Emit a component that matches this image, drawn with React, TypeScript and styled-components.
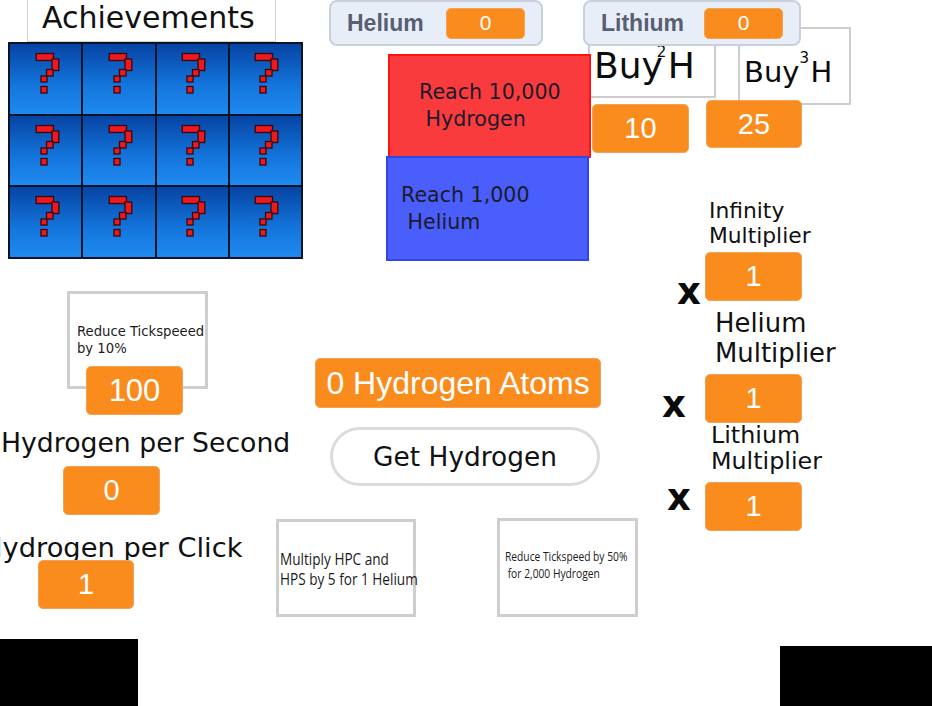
import React from "react";
import styled, { createGlobalStyle } from "styled-components";

const GlobalStyle = createGlobalStyle`
  html, body { margin: 0; padding: 0; background: #ffffff; }
  body { font-family: "DejaVu Sans", "Open Sans", sans-serif; color: #111; }
  * { box-sizing: border-box; }
`;

type Offset = { $mt?: number; $ml?: number };
const offset = (p: Offset) => `margin: ${p.$mt ?? 0}px 0 0 ${p.$ml ?? 0}px;`;

const Screen = styled.main`
  display: flex;
  align-items: flex-start;
  width: 932px;
  height: 706px;
  overflow: hidden;
  background: #ffffff;
`;

const Column = styled.section<{ $w: number }>`
  display: flex;
  flex-direction: column;
  align-items: flex-start;
  flex: 0 0 ${(p) => p.$w}px;
  width: ${(p) => p.$w}px;
`;

/* ---------- achievements ---------- */
const AchievementPanel = styled.div`
  display: flex;
  flex-direction: column;
  align-items: flex-start;
  margin-left: 8px;
`;

const PanelTitle = styled.div`
  margin-left: 19px;
  width: 249px;
  height: 42px;
  padding-left: 14px;
  border: 1px solid #cfcfcf;
  border-top: none;
  background: #fff;
  font-size: 30px;
  line-height: 35px;
  color: #111;
`;

const AchievementGrid = styled.div`
  display: grid;
  grid-template-columns: repeat(4, 1fr);
  grid-template-rows: repeat(3, 1fr);
  gap: 2px;
  padding: 2px;
  width: 295px;
  height: 217px;
  background: #0b1424;
`;

const Tile = styled.div`
  display: flex;
  justify-content: center;
  align-items: flex-start;
  padding: 8px 0 0 3px;
  background: linear-gradient(180deg, #0644a4 0%, #1476dc 60%, #1e8af1 100%);
`;

const MysteryMark = () => (
  <svg width="25" height="43" viewBox="0 0 25 43">
    <g fill="#ec1a1f" stroke="#3b0608" strokeWidth="1.3">
      <rect x="1.2" y="1.5" width="17.3" height="7" />
      <rect x="17" y="7" width="6.8" height="11.5" />
      <rect x="11.5" y="17.5" width="6.5" height="6.5" />
      <rect x="6" y="24" width="6" height="6" />
      <rect x="6" y="34.5" width="6" height="6.5" />
    </g>
  </svg>
);

/* ---------- resource pills ---------- */
const ResourcePill = styled.div<Offset & { $w: number }>`
  ${offset}
  position: relative;
  z-index: 3;
  display: flex;
  align-items: center;
  justify-content: space-between;
  width: ${(p) => p.$w}px;
  height: 46px;
  padding: 0 16px;
  background: #e8eef7;
  border: 2px solid #c8d0dd;
  border-radius: 8px;
`;

const PillLabel = styled.span`
  font-family: "Liberation Sans", Arial, sans-serif;
  font-weight: 700;
  font-size: 23px;
  color: #575e75;
`;

/* ---------- orange value boxes ---------- */
const Value = styled.div<Offset & { $w: number; $h: number; $size: number }>`
  ${offset}
  position: relative;
  z-index: 2;
  display: flex;
  flex: 0 0 auto;
  align-items: center;
  justify-content: center;
  width: ${(p) => p.$w}px;
  height: ${(p) => p.$h}px;
  background: #fa8c1e;
  border: 1px solid #f2a257;
  border-radius: 5px;
  color: #ffffff;
  font-family: "Liberation Sans", Arial, sans-serif;
  font-size: ${(p) => p.$size}px;
  white-space: nowrap;
`;

/* ---------- goal cards ---------- */
const GoalCard = styled.div<Offset & { $bg: string; $edge: string; $pad: number; $h: number }>`
  ${offset}
  position: relative;
  display: flex;
  align-items: center;
  width: 203px;
  height: ${(p) => p.$h}px;
  padding-left: ${(p) => p.$pad}px;
  background: ${(p) => p.$bg};
  border: 2px solid ${(p) => p.$edge};
  font-size: 20.6px;
  line-height: 27px;
  color: #1c1a2b;
  white-space: pre;
`;

/* ---------- buy cards ---------- */
const BuyRow = styled.div`
  display: flex;
  align-items: flex-start;
  margin-top: -19px;
`;

const BuyStack = styled.div<Offset>`
  ${offset}
  display: flex;
  flex-direction: column;
  align-items: flex-start;
`;

const BuyCard = styled.div<{ $w: number; $h: number; $size: number; $padTop: number }>`
  width: ${(p) => p.$w}px;
  height: ${(p) => p.$h}px;
  padding: ${(p) => p.$padTop}px 0 0 4px;
  background: #fff;
  border: 2px solid #cdcdcd;
  font-size: ${(p) => p.$size}px;
  line-height: 1;
  color: #0c0c0c;
  white-space: nowrap;
`;

const Power = styled.span<{ $gap: number; $dx: number; $dy: number }>`
  display: inline-block;
  position: relative;
  width: ${(p) => p.$gap}px;
  left: ${(p) => p.$dx}px;
  top: ${(p) => p.$dy}px;
  font-size: 15px;
  line-height: 1;
  vertical-align: top;
`;

/* ---------- labels ---------- */
const StackLabel = styled.div<Offset & { $size: number; $lh: number }>`
  ${offset}
  font-size: ${(p) => p.$size}px;
  line-height: ${(p) => p.$lh}px;
  color: #111;
  white-space: pre;
`;

const MultRow = styled.div<{ $mt: number }>`
  display: flex;
  align-items: flex-start;
  margin: ${(p) => p.$mt}px 0 0 79px;
`;

const Times = styled.div<{ $x: number; $y: number }>`
  flex: 0 0 43px;
  margin-top: ${(p) => p.$y}px;
  padding-left: ${(p) => p.$x}px;
  font-size: 37px;
  font-weight: 700;
  line-height: 36px;
  color: #0a0a0a;
`;

/* ---------- cards with small text ---------- */
const InfoCard = styled.div<Offset & { $w: number; $h: number }>`
  ${offset}
  flex: 0 0 auto;
  width: ${(p) => p.$w}px;
  height: ${(p) => p.$h}px;
  background: #fff;
  border: 3px solid #cecece;
`;

const CardText = styled.div<{ $size: number; $lh: number; $top: number; $left: number }>`
  margin: ${(p) => p.$top}px 0 0 ${(p) => p.$left}px;
  font-size: ${(p) => p.$size}px;
  line-height: ${(p) => p.$lh}px;
  color: #1b1b1b;
  white-space: pre;
`;

const NarrowText = styled(CardText)<{ $scale: number }>`
  font-family: "Open Sans", "Noto Sans", sans-serif;
  transform: scaleX(${(p) => p.$scale});
  transform-origin: left top;
`;

const UpgradeRow = styled.div`
  display: flex;
  align-items: flex-start;
  gap: 81px;
  margin-top: 32px;
`;

const HeroButton = styled.button`
  display: flex;
  align-items: center;
  justify-content: center;
  margin: 19px 0 0 54px;
  width: 270px;
  height: 59px;
  padding: 0;
  background: #fff;
  border: 3px solid #dcdcdc;
  border-radius: 30px;
  font-family: "DejaVu Sans", "Open Sans", sans-serif;
  font-size: 26.4px;
  color: #111;
`;

const BlackBlock = styled.div<Offset & { $w: number; $h: number }>`
  ${offset}
  flex: 0 0 auto;
  width: ${(p) => p.$w}px;
  height: ${(p) => p.$h}px;
  background: #000;
`;

export default function App() {
  return (
    <>
      <GlobalStyle />
      <Screen>
        <Column $w={276}>
          <AchievementPanel>
            <PanelTitle>Achievements</PanelTitle>
            <AchievementGrid>
              {Array.from({ length: 12 }).map((_, i) => (
                <Tile key={i}>
                  <MysteryMark />
                </Tile>
              ))}
            </AchievementGrid>
          </AchievementPanel>

          <InfoCard $mt={32} $ml={67} $w={141} $h={98}>
            <CardText $size={13.2} $lh={16.5} $top={30} $left={7}>
              {"Reduce Tickspeeed\nby 10%"}
            </CardText>
          </InfoCard>
          <Value $mt={-23} $ml={86} $w={97} $h={49} $size={31}>100</Value>

          <StackLabel $mt={9} $ml={1} $size={26.7} $lh={38}>Hydrogen per Second</StackLabel>
          <Value $mt={4} $ml={63} $w={97} $h={49} $size={29}>0</Value>
          <StackLabel $mt={15} $ml={-18} $size={27.3} $lh={36}>Hydrogen per Click</StackLabel>
          <Value $mt={-6} $ml={38} $w={96} $h={49} $size={29}>1</Value>

          <BlackBlock $mt={30} $w={138} $h={67} />
        </Column>

        <Column $w={307}>
          <ResourcePill $ml={53} $w={214}>
            <PillLabel>Helium</PillLabel>
            <Value $w={79} $h={31} $size={21}>0</Value>
          </ResourcePill>

          <GoalCard $mt={8} $ml={112} $h={104} $bg="#fa3b3d" $edge="#ff1212" $pad={29}>
            {"Reach 10,000\n Hydrogen"}
          </GoalCard>
          <GoalCard $mt={-2} $ml={110} $h={105} $bg="#4a5efc" $edge="#2e48e8" $pad={13}>
            {"Reach 1,000\n Helium"}
          </GoalCard>

          <Value $mt={97} $ml={39} $w={286} $h={50} $size={32}>0 Hydrogen Atoms</Value>
          <HeroButton>Get Hydrogen</HeroButton>

          <UpgradeRow>
            <InfoCard $mt={1} $w={140} $h={98}>
              <NarrowText $size={17} $lh={20} $top={27} $left={1} $scale={0.8}>
                {"Multiply HPC and\nHPS by 5 for 1 Helium"}
              </NarrowText>
            </InfoCard>
            <InfoCard $w={141} $h={99}>
              <NarrowText $size={12.5} $lh={17} $top={27} $left={5} $scale={0.82}>
                {"Reduce Tickspeed by 50%\n for 2,000 Hydrogen"}
              </NarrowText>
            </InfoCard>
          </UpgradeRow>
        </Column>

        <Column $w={349}>
          <ResourcePill $w={218}>
            <PillLabel>Lithium</PillLabel>
            <Value $w={79} $h={31} $size={21}>0</Value>
          </ResourcePill>

          <BuyRow>
            <BuyStack $mt={17} $ml={5}>
              <BuyCard $w={128} $h={54} $size={36} $padTop={2}>
                Buy<Power $gap={5} $dx={-6} $dy={-3}>2</Power>H
              </BuyCard>
              <Value $mt={6} $ml={4} $w={97} $h={49} $size={29}>10</Value>
            </BuyStack>
            <BuyStack $ml={22}>
              <BuyCard $w={113} $h={78} $size={29} $padTop={29}>
                Buy<Power $gap={11} $dx={0} $dy={-7}>3</Power>H
              </BuyCard>
              <Value $mt={-5} $ml={-32} $w={96} $h={48} $size={29}>25</Value>
            </BuyStack>
          </BuyRow>

          <StackLabel $mt={46} $ml={126} $size={21.8} $lh={24.5}>{"Infinity\nMultiplier"}</StackLabel>
          <MultRow $mt={4}>
            <Times $x={15} $y={22}>x</Times>
            <Value $w={97} $h={49} $size={29}>1</Value>
          </MultRow>

          <StackLabel $mt={-2} $ml={132} $size={25.9} $lh={30}>{"Helium\nMultiplier"}</StackLabel>
          <MultRow $mt={6}>
            <Times $x={0} $y={13}>x</Times>
            <Value $w={97} $h={49} $size={29}>1</Value>
          </MultRow>

          <StackLabel $mt={-1} $ml={128} $size={23.8} $lh={26}>{"Lithium\nMultiplier"}</StackLabel>
          <MultRow $mt={8}>
            <Times $x={5} $y={-2}>x</Times>
            <Value $w={97} $h={49} $size={29}>1</Value>
          </MultRow>

          <BlackBlock $mt={115} $ml={197} $w={152} $h={60} />
        </Column>
      </Screen>
    </>
  );
}
